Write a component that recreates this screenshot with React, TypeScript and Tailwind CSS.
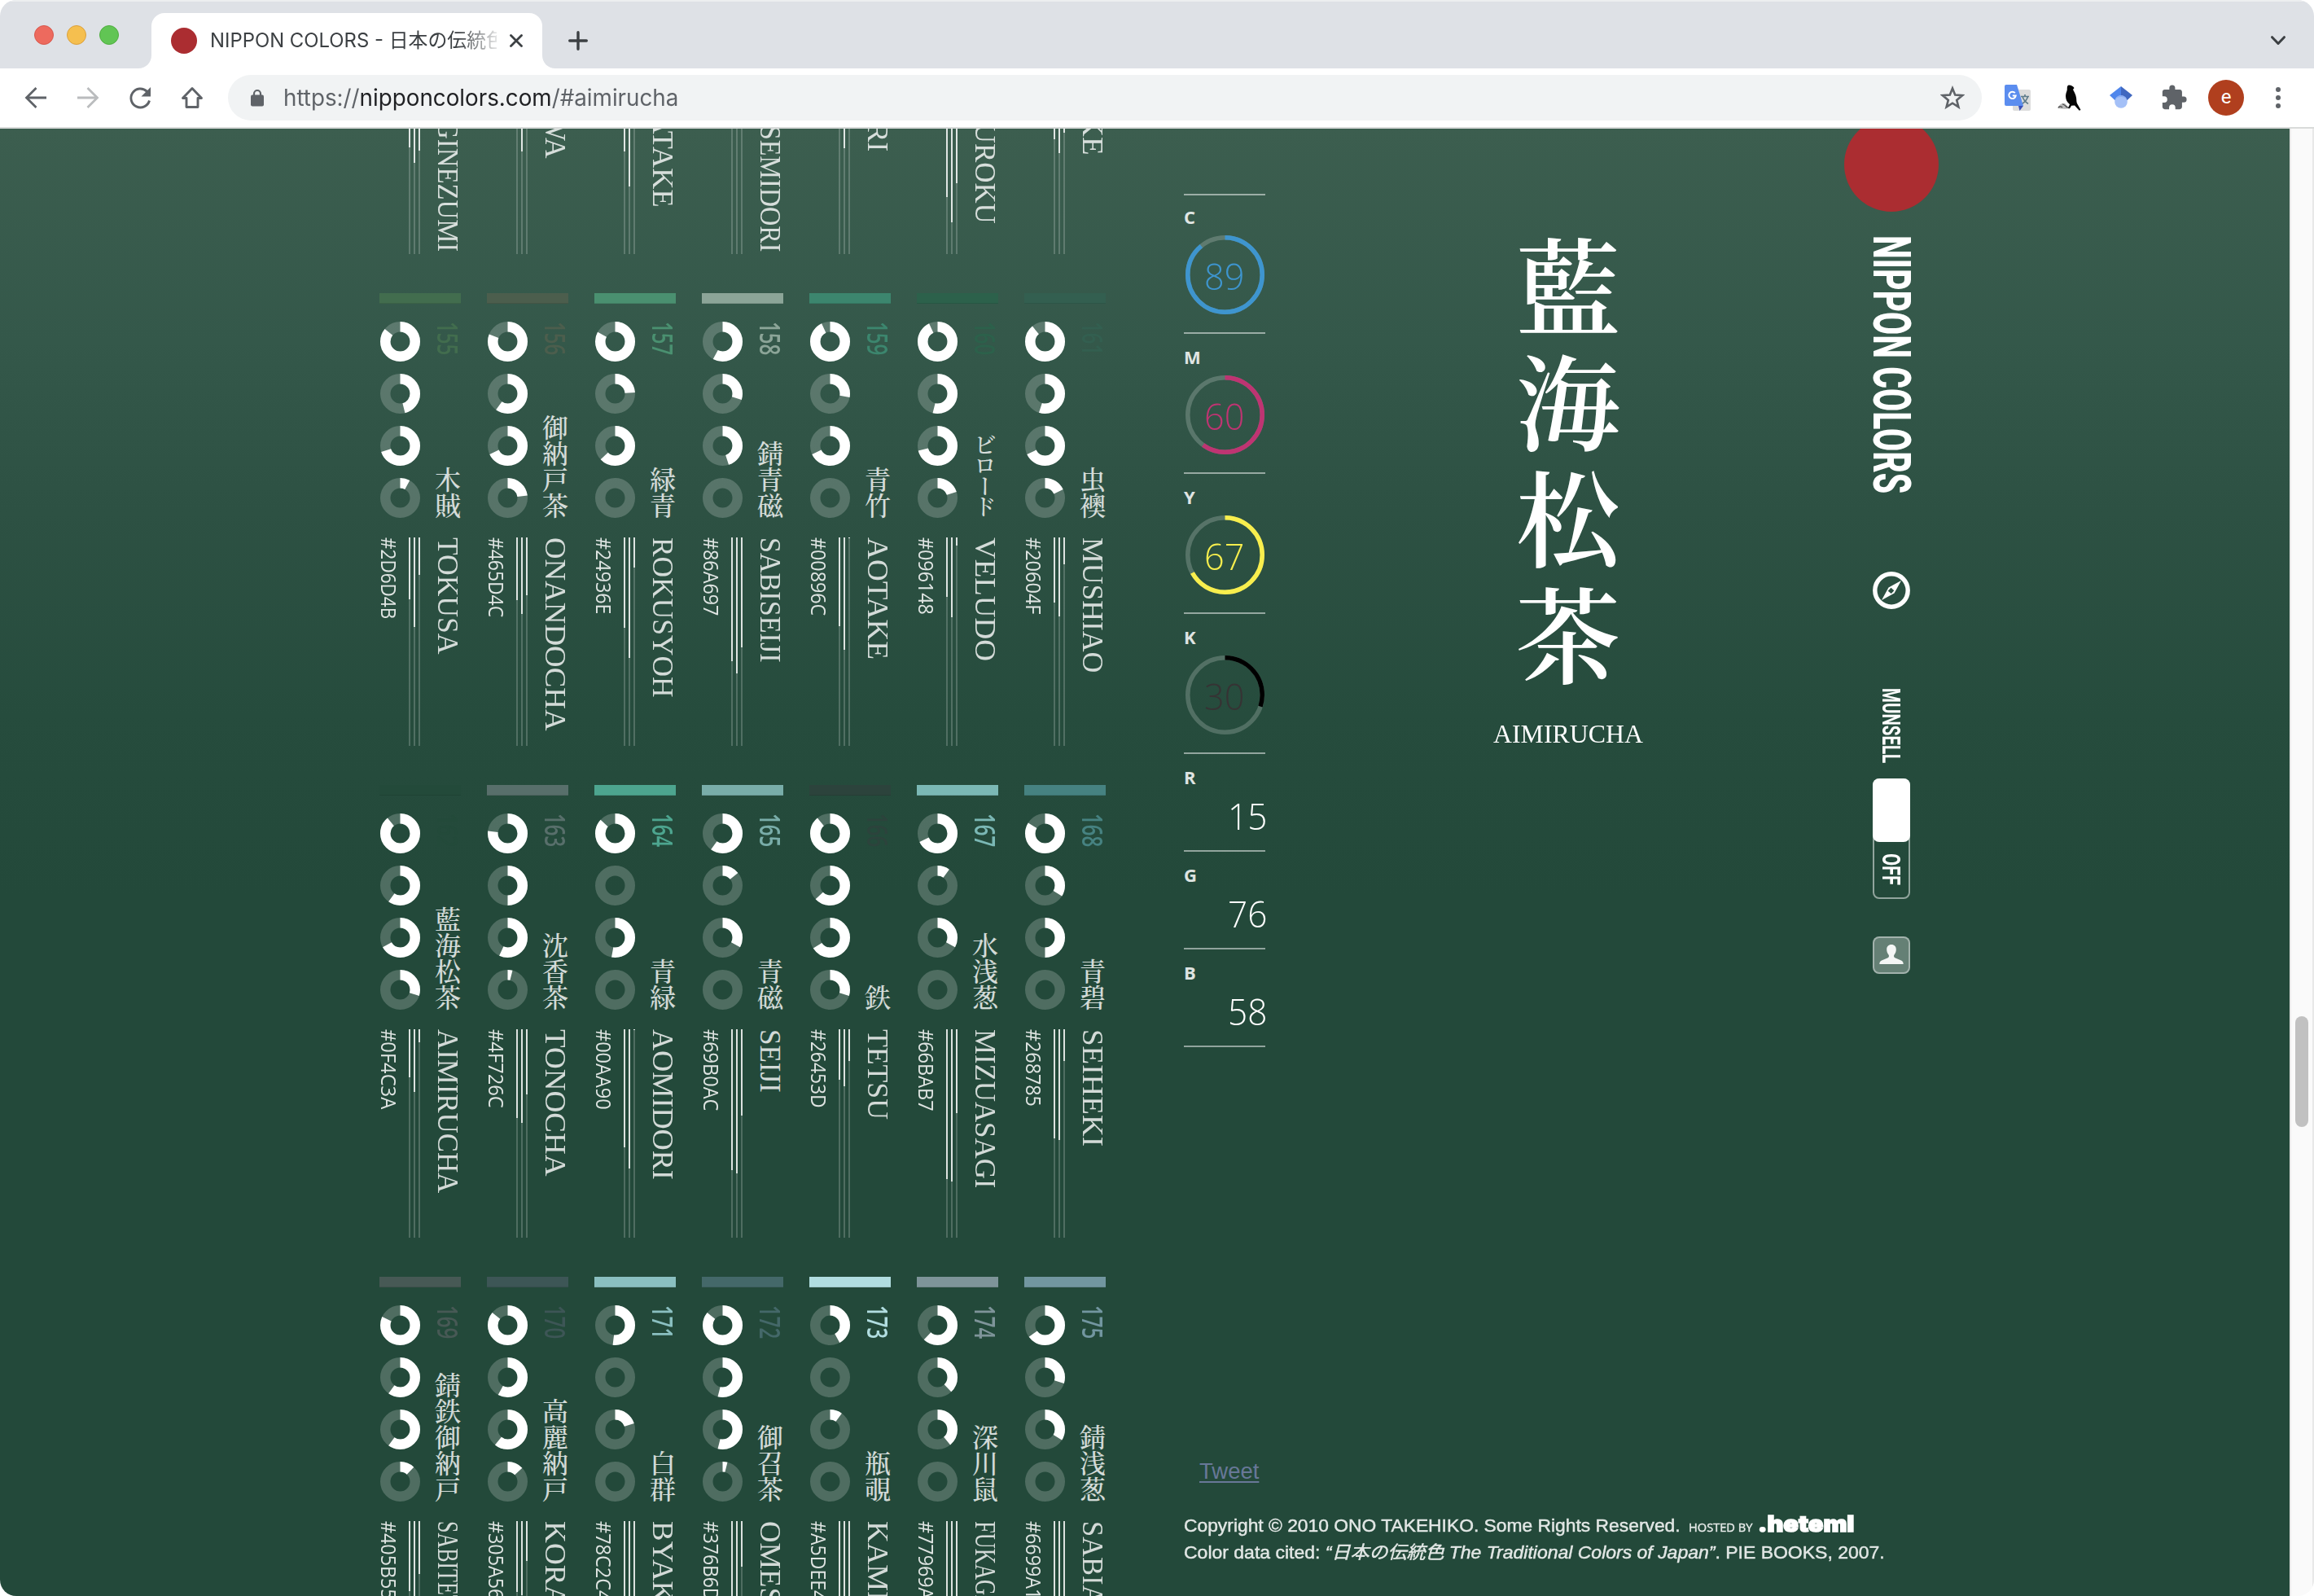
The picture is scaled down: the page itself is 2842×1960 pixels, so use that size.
import { useLayoutEffect, useRef, useState, type ReactNode } from "react";

type Swatch = {
  no: string;
  kanji: string;
  name: string;
  hex: string;
  tint: string;
  cmyk: [number, number, number, number];
  len?: number;
};

const swatches: Swatch[] = [
  { no: "148", kanji: "柳鼠", name: "YANAGINEZUMI", hex: "#808F7C", tint: "#808F7C", cmyk: [50, 30, 50, 10], len: 253 },
  { no: "149", kanji: "常磐", name: "TOKIWA", hex: "#1B813E", tint: "#1B813E", cmyk: [90, 40, 90, 0], len: 138 },
  { no: "150", kanji: "若竹", name: "WAKATAKE", hex: "#5DAC81", tint: "#5DAC81", cmyk: [60, 10, 50, 0], len: 199 },
  { no: "151", kanji: "千歳緑", name: "CHITOSEMIDORI", hex: "#36563C", tint: "#36563C", cmyk: [80, 60, 80, 20], len: 253 },
  { no: "152", kanji: "緑", name: "MIDORI", hex: "#227D51", tint: "#227D51", cmyk: [90, 40, 80, 0], len: 130 },
  { no: "153", kanji: "白緑", name: "BYAKUROKU", hex: "#A8D8B9", tint: "#A8D8B9", cmyk: [40, 0, 30, 0], len: 219 },
  { no: "154", kanji: "老竹", name: "OITAKE", hex: "#6A8372", tint: "#6A8372", cmyk: [60, 40, 50, 10], len: 134 },
  { no: "155", kanji: "木賊", name: "TOKUSA", hex: "#2D6D4B", tint: "#426d4e", cmyk: [86, 46, 70, 8], len: 143 },
  { no: "156", kanji: "御納戸茶", name: "ONANDOCHA", hex: "#465D4C", tint: "#4c5e4d", cmyk: [81, 60, 68, 23], len: 238 },
  { no: "157", kanji: "緑青", name: "ROKUSYOH", hex: "#24936E", tint: "#4a9070", cmyk: [83, 24, 63, 0], len: 196 },
  { no: "158", kanji: "錆青磁", name: "SABISEIJI", hex: "#86A697", tint: "#8ca598", cmyk: [58, 30, 45, 0], len: 154 },
  { no: "159", kanji: "青竹", name: "AOTAKE", hex: "#00896C", tint: "#3c866e", cmyk: [93, 28, 68, 0], len: 150 },
  { no: "160", kanji: "ビロード", name: "VELUDO", hex: "#096148", tint: "#2c614b", cmyk: [93, 54, 71, 20], len: 152 },
  { no: "161", kanji: "虫襖", name: "MUSHIAO", hex: "#20604F", tint: "#335f50", cmyk: [89, 55, 68, 18], len: 166 },
  { no: "162", kanji: "藍海松茶", name: "AIMIRUCHA", hex: "#0F4C3A", tint: "#234a3a", cmyk: [89, 60, 67, 30], len: 201 },
  { no: "163", kanji: "沈香茶", name: "TONOCHA", hex: "#4F726C", tint: "#586f6b", cmyk: [77, 50, 57, 4], len: 180 },
  { no: "164", kanji: "青緑", name: "AOMIDORI", hex: "#00AA90", tint: "#4da58f", cmyk: [87, 0, 53, 0], len: 185 },
  { no: "165", kanji: "青磁", name: "SEIJI", hex: "#69B0AC", tint: "#79ada9", cmyk: [60, 14, 33, 0], len: 78 },
  { no: "166", kanji: "鉄", name: "TETSU", hex: "#26453D", tint: "#2c433c", cmyk: [89, 63, 66, 30], len: 111 },
  { no: "167", kanji: "水浅葱", name: "MIZUASAGI", hex: "#66BAB7", tint: "#7bb8b5", cmyk: [68, 10, 33, 0], len: 195 },
  { no: "168", kanji: "青碧", name: "SEIHEKI", hex: "#268785", tint: "#468281", cmyk: [84, 34, 50, 0], len: 144 },
  { no: "169", kanji: "錆鉄御納戸", name: "SABITETSUONANDO", hex: "#405B55", tint: "#475955", cmyk: [82, 60, 60, 12], len: 252 },
  { no: "170", kanji: "高麗納戸", name: "KORAINANDO", hex: "#305A56", tint: "#3d5656", cmyk: [86, 58, 61, 13], len: 252 },
  { no: "171", kanji: "白群", name: "BYAKUGUN", hex: "#78C2C4", tint: "#8abfc0", cmyk: [52, 0, 20, 0], len: 206 },
  { no: "172", kanji: "御召茶", name: "OMESHICHA", hex: "#376B6D", tint: "#446869", cmyk: [86, 54, 54, 4], len: 218 },
  { no: "173", kanji: "瓶覗", name: "KAMENOZOKI", hex: "#A5DEE4", tint: "#b1dde0", cmyk: [42, 0, 10, 0], len: 250 },
  { no: "174", kanji: "深川鼠", name: "FUKAGAWANEZUMI", hex: "#77969A", tint: "#7e9499", cmyk: [62, 38, 39, 0], len: 252 },
  { no: "175", kanji: "錆浅葱", name: "SABIASAGI", hex: "#6699A1", tint: "#7296a0", cmyk: [65, 30, 34, 0], len: 184 },
];

/** Text stretched along its writing direction to an exact length. */
function Fit({ len, vertical, className = "", children }: { len: number; vertical?: boolean; className?: string; children: ReactNode }) {
  const ref = useRef<HTMLSpanElement>(null);
  const [k, setK] = useState(1);
  useLayoutEffect(() => {
    const el = ref.current;
    if (el) setK(len / (vertical ? el.offsetHeight : el.offsetWidth));
  }, [len, vertical]);
  return (
    <div className="shrink-0" style={vertical ? { height: len } : { width: len }}>
      <span
        ref={ref}
        className={`block w-fit h-fit origin-top-left whitespace-nowrap ${vertical ? "[writing-mode:vertical-rl]" : ""} ${className}`}
        style={{ transform: vertical ? `scaleY(${k})` : `scaleX(${k})` }}
      >
        {children}
      </span>
    </div>
  );
}

function Ring({ value, size, stroke, color }: { value: number; size: number; stroke: number; color: string }) {
  const r = (size - stroke) / 2;
  const c = size / 2;
  return (
    <svg width={size} height={size} className="block shrink-0">
      <circle cx={c} cy={c} r={r} fill="none" stroke="#fff" strokeOpacity={0.2} strokeWidth={stroke} />
      {value > 0 && (
        <circle
          cx={c}
          cy={c}
          r={r}
          fill="none"
          stroke={color}
          strokeWidth={stroke}
          pathLength={100}
          strokeDasharray={`${value} 100`}
          transform={`rotate(-90 ${c} ${c})`}
        />
      )}
    </svg>
  );
}

function Channel({ value }: { value: number }) {
  return (
    <div className="h-[256px] w-[2px] bg-white/20">
      <div className="w-full bg-white/80" style={{ height: value + 1 }} />
    </div>
  );
}

function Card({ s }: { s: Swatch }) {
  const rgb = [1, 3, 5].map((i) => parseInt(s.hex.slice(i, i + 2), 16));
  return (
    <li className="flex h-[604px] w-[100px] flex-col">
      <div className="h-[13px] border-b border-black/10" style={{ backgroundColor: s.tint }} />
      <div className="flex h-[287px] justify-between pt-[22px]">
        <div className="flex flex-col gap-[15px] pl-[1px]">
          {s.cmyk.map((v, i) => (
            <Ring key={i} value={v} size={49} stroke={12.5} color="#fff" />
          ))}
        </div>
        <div className="flex w-8 flex-col items-center justify-between pb-[23px]">
          <div style={{ color: s.tint }}>
            <Fit vertical len={41} className="font-['Open_Sans'] text-[34px] leading-[32px] font-semibold">{s.no}</Fit>
          </div>
          <div
            className={`font-['Noto_Serif_CJK_JP','Noto_Sans_CJK_JP',serif] leading-[32px] font-medium text-white/80 [writing-mode:vertical-rl] ${
              s.kanji === "ビロード" ? "mb-[3px] text-[28px] -tracking-[2.500px]" : "text-[32px]"
            }`}
          >
            {s.kanji}
          </div>
        </div>
      </div>
      <div className="flex">
        <div className="w-9">
          <Fit
            vertical
            len={s.hex.length * 13.7 + (s.hex.match(/[BCDA]/g) ?? []).length * 1.8 - 1}
            className="font-['Open_Sans'] text-[26px] leading-[24px] font-medium text-white/85"
          >
            {s.hex}
          </Fit>
        </div>
        <div className="flex gap-1">
          <Channel value={rgb[2]} />
          <Channel value={rgb[1]} />
          <Channel value={rgb[0]} />
        </div>
        <div className="ml-[17px] w-8">
          <Fit vertical len={s.len ?? 200} className="font-['Liberation_Serif'] text-[35px] leading-[32px] text-white/80">
            {s.name}
          </Fit>
        </div>
      </div>
    </li>
  );
}

const inks = [
  { k: "C", v: 89, ring: "#3e95cf", cls: "text-[#3e95cf]" },
  { k: "M", v: 60, ring: "#bf3472", cls: "text-[#bf3472]" },
  { k: "Y", v: 67, ring: "#f8ee4d", cls: "text-[#f8ee4d]" },
  { k: "K", v: 30, ring: "#000000", cls: "text-[#363334]" },
];

function Readouts() {
  return (
    <div className="flex w-[100px] flex-col pt-[80px]">
      {inks.map((c, i) => (
        <div key={c.k} className={`flex flex-col border-t-2 border-white/50 ${i === 0 ? "h-[170px] pt-[13px]" : "h-[172px] pt-[15px]"}`}>
          <div className="font-['Open_Sans'] text-[22px] leading-[26px] font-bold text-white/85">{c.k}</div>
          <div className="mt-[10px] grid place-items-center">
            <div className="col-start-1 row-start-1">
              <Ring value={c.v} size={97} stroke={5.5} color={c.ring} />
            </div>
            <div className={`col-start-1 row-start-1 pt-[3px] pr-[2px] ${c.cls}`}>
              <Fit len={49} className="font-['Open_Sans'] text-[45px] leading-[48px] font-[340]">{c.v}</Fit>
            </div>
          </div>
        </div>
      ))}
      {[
        ["R", 15],
        ["G", 76],
        ["B", 58],
      ].map(([k, v]) => (
        <div key={k} className="flex h-[120px] flex-col border-t-2 border-white/50 pt-[15px]">
          <div className="font-['Open_Sans'] text-[22px] leading-[26px] font-bold text-white/85">{k}</div>
          <div className="-mr-[2px] mt-[11px] flex justify-end text-white">
            <Fit len={48} className="font-['Open_Sans'] text-[45px] leading-[48px] font-[340]">{v}</Fit>
          </div>
        </div>
      ))}
      <div className="h-[2px] bg-white/50" />
    </div>
  );
}

function SideNav() {
  return (
    <div className="-mt-[14px] flex w-[118px] flex-col items-center">
      <div className="mr-[1px] h-[116px] w-[116px] shrink-0 rounded-full bg-[#ab2d31]" />
      <div className="mt-[29px] pr-[2px] text-white">
        <Fit vertical len={317} className="font-['Roboto'] text-[64px] leading-[60px] font-extrabold">NIPPON COLORS</Fit>
      </div>
      <svg className="mt-[96px] block" width="46" height="46" viewBox="0 0 46 46">
        <circle cx="23" cy="23" r="20.2" fill="none" stroke="#fff" strokeWidth="5.4" />
        <path fillRule="evenodd" fill="#fff" d="M35 11 26.5 26.5 11 35 19.500 19.500ZM22.500 19.800 18.700 23.700 22.800 27 26.300 23.300Z" />
      </svg>
      <div className="mt-[97px] text-white">
        <Fit vertical len={92} className="font-['Roboto'] text-[32px] leading-[32px] font-bold">MUNSELL</Fit>
      </div>
      <div className="mt-[19px] flex h-[148px] w-[46px] flex-col items-center rounded-lg border-2 border-white/50">
        <div className="-mt-[2px] h-[78px] w-[46px] shrink-0 rounded-lg bg-white" />
        <div className="mt-[14px] text-white">
          <Fit vertical len={39} className="font-['Roboto'] text-[32px] leading-[32px] font-bold">OFF</Fit>
        </div>
      </div>
      <div className="mt-[46px] flex h-[46px] w-[46px] items-center justify-center rounded-lg border-2 border-white/40 bg-white/30">
        <svg width="30" height="26" viewBox="0 0 30 26">
          <path
            fill="#f4f6f5"
            d="M15 0c3.600 0 5.800 2.500 5.800 6 0 2.600-.8 4.600-2.300 6.400-.9 1.200-.6 3 .8 3.800l7.700 3.300c1.800.8 2.700 2.200 2.700 4.500H.3c0-2.300.9-3.700 2.700-4.500l7.700-3.300c1.400-.8 1.700-2.600.8-3.800C10 10.600 9.200 8.600 9.200 6c0-3.500 2.200-6 5.800-6Z"
          />
        </svg>
      </div>
    </div>
  );
}

function Footer() {
  return (
    <footer className="flex w-[926px] flex-col pb-[37px]">
      <div className="pl-[19px] font-['Liberation_Sans'] text-[27.500px] leading-[32px] text-[#687898]">
        <a className="underline decoration-2 underline-offset-[3px]">Tweet</a>
      </div>
      <div className="mt-[35px] flex font-['Liberation_Sans','Noto_Sans_CJK_JP',sans-serif] text-[22px] leading-[32px] text-white/85 [-webkit-text-stroke:0.5px_rgba(255,255,255,0.7)]">
        <Fit len={610}>Copyright © 2010 ONO TAKEHIKO. Some Rights Reserved.</Fit>
        <div className="ml-[10px] pt-[1px]">
          <Fit len={78} className="font-['Open_Sans'] text-[15px] leading-[32px]">HOSTED BY</Fit>
        </div>
        <div className="ml-[7px] text-white">
          <Fit len={118} className="font-['Inter'] text-[27px] leading-[28px] font-black [-webkit-text-stroke:1.5px_white]">.heteml</Fit>
        </div>
      </div>
      <div className="font-['Liberation_Sans','Noto_Sans_CJK_JP',sans-serif] text-[22px] leading-[32px] text-white/85 [-webkit-text-stroke:0.5px_rgba(255,255,255,0.7)]">
        <Fit len={861}>
          Color data cited: <i>“日本の伝統色 The Traditional Colors of Japan”</i>. PIE BOOKS, 2007.
        </Fit>
      </div>
    </footer>
  );
}

function TabStrip() {
  return (
    <div className="flex h-[84px] shrink-0 items-end border-t-2 border-[#eceef0] bg-[#dee1e6]">
      <div className="flex h-full w-[170px] items-center gap-4 pl-[42px]">
        <div className="h-6 w-6 rounded-full border border-[#d8574c] bg-[#ed6a5e]" />
        <div className="h-6 w-6 rounded-full border border-[#dba03c] bg-[#f5bf4f]" />
        <div className="h-6 w-6 rounded-full border border-[#4fad3f] bg-[#61c554]" />
      </div>
      <svg width="16" height="16" className="block shrink-0">
        <path d="M16 0v16H0C9 16 16 9 16 0Z" fill="#fff" />
      </svg>
      <div className="flex h-[68px] w-[480px] items-center rounded-t-2xl bg-white pl-6">
        <div className="h-8 w-8 shrink-0 rounded-full bg-[#ab2d31]" />
        <div className="ml-4 w-[352px] overflow-hidden font-['Inter','Noto_Sans_CJK_JP',sans-serif] text-[24px] leading-[32px] whitespace-nowrap text-[#3c4043] [mask-image:linear-gradient(to_right,black_305px,transparent_360px)]">
          <Fit len={363}>NIPPON COLORS - 日本の伝統色</Fit>
        </div>
        <svg width="16" height="16" viewBox="0 0 16 16" className="ml-4 shrink-0" stroke="#3c4043" strokeWidth="2.8" strokeLinecap="round">
          <path d="M1.500 1.500 14.500 14.500M14.500 1.500 1.500 14.500" />
        </svg>
      </div>
      <svg width="16" height="16" className="block shrink-0">
        <path d="M0 0v16h16C7 16 0 9 0 0Z" fill="#fff" />
      </svg>
      <svg width="24" height="24" viewBox="0 0 24 24" className="mb-[22px] ml-4 shrink-0" stroke="#3c4043" strokeWidth="3.400" strokeLinecap="round">
        <path d="M12 1.700v20.600M1.700 12h20.600" />
      </svg>
      <svg width="18" height="12" viewBox="0 0 18 12" className="mr-[35px] mb-[28px] ml-auto shrink-0" fill="none" stroke="#3c4043" strokeWidth="3" strokeLinecap="round" strokeLinejoin="round">
        <path d="M1.600 1.700 9 9.500 16.400 1.700" />
      </svg>
    </div>
  );
}

function Toolbar() {
  return (
    <div className="flex h-[74px] shrink-0 items-center border-b-2 border-[#d9dbda] bg-white">
      <div className="flex w-[280px] items-center gap-8 pl-7">
        <svg width="32" height="32" viewBox="0 0 32 32" fill="none" stroke="#5f6368" strokeWidth="2.800">
          <path d="M29 16H5M16.500 4 4.500 16l12 12" />
        </svg>
        <svg width="32" height="32" viewBox="0 0 32 32" fill="none" stroke="#babcbe" strokeWidth="2.800">
          <path d="M3 16h24M15.500 4l12 12-12 12" />
        </svg>
        <svg width="32" height="32" viewBox="0 0 32 32" fill="none">
          <path d="M27.500 19.500a11.500 11.500 0 1 1-3.200-11.400l3 3" stroke="#5f6368" strokeWidth="2.900" />
          <path d="M29 3v11.500H17.500Z" fill="#5f6368" />
        </svg>
        <svg width="32" height="32" viewBox="0 0 32 32" fill="none" stroke="#5f6368" strokeWidth="2.900" strokeLinejoin="round">
          <path d="M16 4.500 4.500 16.500H9V27.500h14V16.500h4.500Z" />
        </svg>
      </div>
      <div className="flex h-14 w-[2154px] items-center rounded-full bg-[#f1f3f4] pr-[21px] pl-7">
        <svg width="16" height="22" viewBox="0 0 16 22">
          <path d="M4 9V6a4 4 0 0 1 8 0v3" fill="none" stroke="#5f6368" strokeWidth="2.200" />
          <rect x="0" y="7.500" width="16" height="14" rx="2" fill="#5f6368" />
        </svg>
        <div className="ml-6 font-['Inter'] text-[28px] leading-[36px] text-[#5f6368]">
          <Fit len={485}>
            https://<span className="text-[#202124]">nipponcolors.com</span>/#aimirucha
          </Fit>
        </div>
        <svg width="30" height="30" viewBox="0 0 30 30" className="ml-auto" fill="none" stroke="#5f6368" strokeWidth="2.600">
          <path d="M15 3.500 18.200 11.600 27 12.200 20.200 17.900 22.400 26.400 15 21.700 7.600 26.400 9.800 17.900 3 12.200 11.800 11.600Z" />
        </svg>
      </div>
      <svg width="32" height="32" viewBox="0 0 32 32" className="ml-[28px]">
        <rect x="10" y="6" width="22" height="26" rx="2" fill="#dcdcdc" />
        <path d="M20 14.500h10M25 12v2.500M22 14.500c1 4 4 7 7 9M28.500 14.500c-1 4-4 7-7 9" stroke="#607d8b" strokeWidth="1.700" fill="none" />
        <path d="M17 26h6l-4.500 6Z" fill="#3b50b8" />
        <path d="M2 0h13l8 26H2a2 2 0 0 1-2-2V2a2 2 0 0 1 2-2Z" fill="#5b8def" />
        <path d="M12.800 10.200a4.200 4.200 0 1 0 .9 3.300H9.800" fill="none" stroke="#fff" strokeWidth="2" />
      </svg>
      <svg width="30" height="32" viewBox="0 0 30 32" className="ml-[32px]">
        <path d="M1 29c2-4 5-7 9-6l6 6c-3 1-10 1-15 0Z" fill="#b9b9b9" />
        <path d="M2 28c2-2 4-1 5 0M7 24c2 0 4 2 6 4M11 27l5 2" stroke="#444" strokeWidth="1.200" fill="none" />
        <path d="M15 .5c3 0 5 1.500 6.500 3.500l-1.500 2c1.500 3 3.500 6 4 10 .4 3 .2 5 1 7l4.500 8-1.800.7L22 25.500l-4 .2-1.500 2.800-2.500.3 2-4.800c-4-3-5.500-7-4.800-12 .5-3 1.800-4.500 1.600-7C12.600 2.500 13.500.5 15 .5Z" fill="#050505" />
      </svg>
      <svg width="28" height="30" viewBox="0 0 28 30" className="ml-[35px]">
        <path d="M14 1 0 12l8 7.500L14 14Z" fill="#4f86ec" />
        <path d="M14 1l14 11-8 7.500L14 14Z" fill="#4068c0" />
        <circle cx="14" cy="20" r="7.800" fill="#a4c0f7" />
        <path d="M6.800 17a7.800 7.800 0 0 1 14.400 0c-3-4-11.400-4-14.400 0Z" fill="#8badf3" />
      </svg>
      <svg width="34" height="34" viewBox="0 0 24 24" className="ml-[34px]" fill="#5f6368">
        <path d="M20.500 11H19V7c0-1.100-.9-2-2-2h-4V3.500a2.500 2.500 0 0 0-5 0V5H4c-1.100 0-2 .9-2 2v3.800h1.500a2.700 2.700 0 0 1 0 5.400H2V20c0 1.100.9 2 2 2h3.800v-1.500a2.700 2.700 0 0 1 5.400 0V22H17c1.100 0 2-.9 2-2v-4h1.500a2.500 2.500 0 0 0 0-5Z" />
      </svg>
      <div className="ml-[25px] flex h-11 w-11 items-center justify-center rounded-full bg-[#b03f1e] pb-[3px] font-['Roboto'] text-[24px] text-white">e</div>
      <div className="ml-[39px] flex flex-col gap-1">
        <div className="h-[6px] w-[6px] rounded-full bg-[#5f6368]" />
        <div className="h-[6px] w-[6px] rounded-full bg-[#5f6368]" />
        <div className="h-[6px] w-[6px] rounded-full bg-[#5f6368]" />
      </div>
    </div>
  );
}

export default function App() {
  return (
    <div className="h-[1960px] w-[2842px] bg-white">
      <div className="flex h-full flex-col overflow-hidden rounded-[20px]">
        <TabStrip />
        <Toolbar />
        <div className="flex h-[1802px]">
          <main className="flex h-full w-[2812px] overflow-hidden bg-[linear-gradient(to_bottom,#3c5e4f_0px,#34584a_260px,#2d5143_470px,#264c3d_720px,#23493a_940px,#23493a_100%)] pl-[466px]">
            <ul className="-mt-[402px] grid h-fit w-[892px] shrink-0 grid-cols-7 gap-x-8">
              {swatches.map((s) => (
                <Card key={s.no} s={s} />
              ))}
            </ul>
            <div className="ml-24 flex flex-col justify-between">
              <div className="flex">
                <Readouts />
                <div className="ml-[242px] flex w-[260px] flex-col items-center pt-[130px] text-white">
                  <h1 className="font-['Noto_Serif_CJK_JP','Noto_Sans_CJK_JP',serif] text-[128px] leading-[144px] font-semibold tracking-[15px] [writing-mode:vertical-rl]">
                    藍海松茶
                  </h1>
                  <div className="mt-[23px]">
                    <Fit len={184} className="font-['Liberation_Serif'] text-[32px] leading-[36px]">AIMIRUCHA</Fit>
                  </div>
                </div>
                <div className="ml-[208px]">
                  <SideNav />
                </div>
              </div>
              <Footer />
            </div>
          </main>
          <div className="flex w-[30px] flex-col items-center border-r-2 border-l-2 border-[#e8e8e8] bg-[#fafafa] pt-[1090px]">
            <div className="h-[136px] w-4 rounded-full bg-[#c1c1c1]" />
          </div>
        </div>
      </div>
    </div>
  );
}
